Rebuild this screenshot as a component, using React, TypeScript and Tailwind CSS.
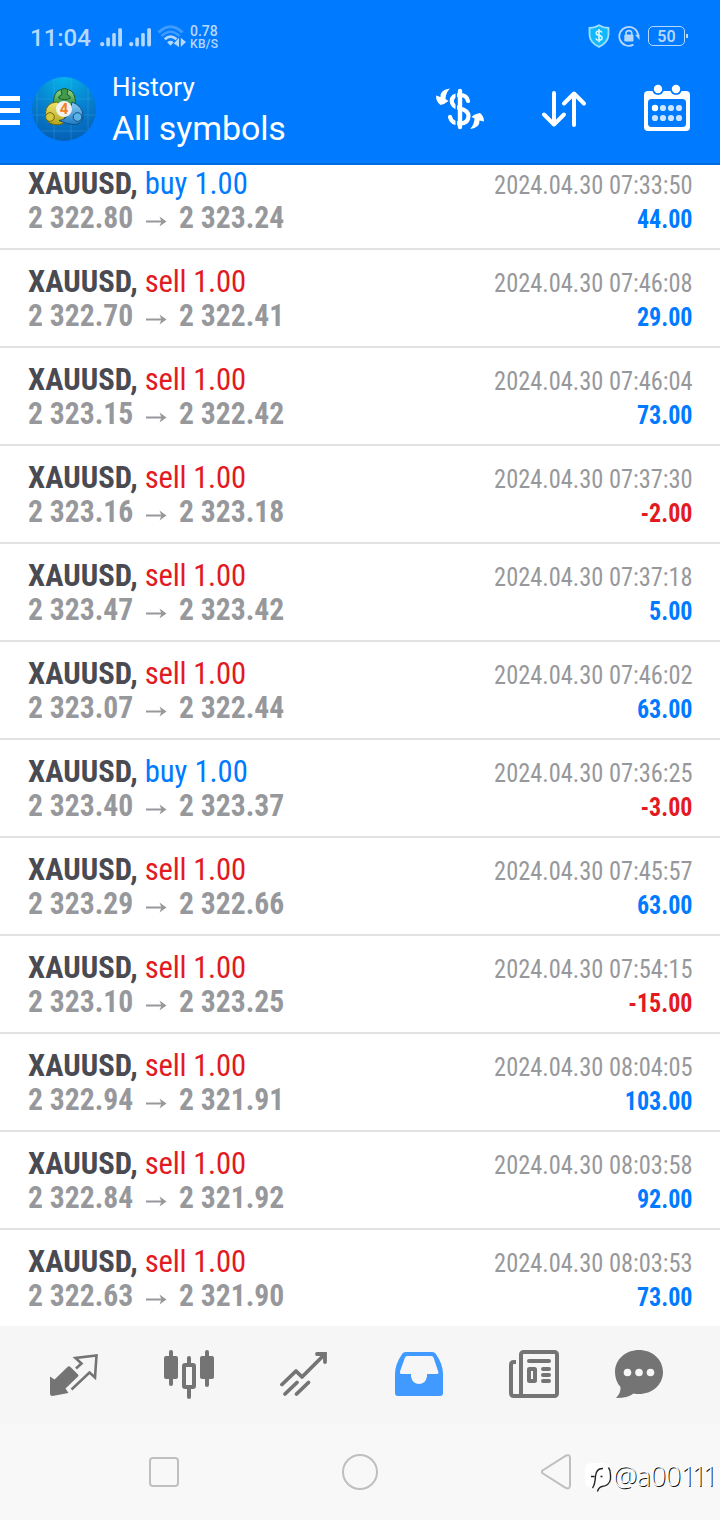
import React from "react";

type Deal = { side: "buy" | "sell"; from: string; to: string; time: string; profit: string };

const deals: Deal[] = [
  { side: "buy", from: "2 322.80", to: "2 323.24", time: "2024.04.30 07:33:50", profit: "44.00" },
  { side: "sell", from: "2 322.70", to: "2 322.41", time: "2024.04.30 07:46:08", profit: "29.00" },
  { side: "sell", from: "2 323.15", to: "2 322.42", time: "2024.04.30 07:46:04", profit: "73.00" },
  { side: "sell", from: "2 323.16", to: "2 323.18", time: "2024.04.30 07:37:30", profit: "-2.00" },
  { side: "sell", from: "2 323.47", to: "2 323.42", time: "2024.04.30 07:37:18", profit: "5.00" },
  { side: "sell", from: "2 323.07", to: "2 322.44", time: "2024.04.30 07:46:02", profit: "63.00" },
  { side: "buy", from: "2 323.40", to: "2 323.37", time: "2024.04.30 07:36:25", profit: "-3.00" },
  { side: "sell", from: "2 323.29", to: "2 322.66", time: "2024.04.30 07:45:57", profit: "63.00" },
  { side: "sell", from: "2 323.10", to: "2 323.25", time: "2024.04.30 07:54:15", profit: "-15.00" },
  { side: "sell", from: "2 322.94", to: "2 321.91", time: "2024.04.30 08:04:05", profit: "103.00" },
  { side: "sell", from: "2 322.84", to: "2 321.92", time: "2024.04.30 08:03:58", profit: "92.00" },
  { side: "sell", from: "2 322.63", to: "2 321.90", time: "2024.04.30 08:03:53", profit: "73.00" },
];

function Signal() {
  return (
    <svg width="23" height="19" viewBox="0 0 23 19" fill="#b5d8ff">
      <circle cx="2.2" cy="16.2" r="2.1" />
      <rect x="6.3" y="9.5" width="3.6" height="9" rx="1.4" />
      <rect x="12.2" y="5" width="3.6" height="13.5" rx="1.4" />
      <rect x="18.2" y="0.3" width="3.8" height="18.2" rx="1.4" />
    </svg>
  );
}

function StatusBar() {
  return (
    <div className="flex h-[74px] text-[#b5d8ff]">
      <div className="ml-[30px] mt-[24px] w-[70px] text-[24px] font-medium leading-[28px]">11:04</div>
      <div className="mt-[28px] flex gap-[6px]">
        <Signal />
        <Signal />
      </div>
      <svg className="ml-[5px] mt-[24px]" width="31" height="25" viewBox="0 0 31 25" fill="none">
        <path d="M1.500 8.500Q13.500-3 25.500 8.500" stroke="#3f9bff" strokeWidth="3" />
        <path d="M4.500 12Q13.500 3.500 22.500 12" stroke="#3f9bff" strokeWidth="2.600" />
        <path d="M7.800 15.300Q13.500 10 19.500 15.300" stroke="#b5d8ff" strokeWidth="2.800" />
        <path d="M10.200 18.200Q13.500 15.500 16.800 18.200L13.500 21.800Z" fill="#b5d8ff" />
        <path d="M22 13.800V23L16.800 19.500ZM23.800 13.800V23L29 18Z" fill="#b5d8ff" />
      </svg>
      <div className="ml-[2px] mt-[25px] text-[12px] font-medium leading-[12.5px]">
        <div className="text-[14px]">0.78</div>
        <div className="tracking-[0.3px]">KB/S</div>
      </div>
      <div className="flex-1" />
      <svg className="mt-[24px]" width="22" height="24" viewBox="0 0 22 24">
        <path d="M11 1.200Q15.500 4 20.500 4V11Q20 19 11 22.800Q2 19 1.500 11V4Q6.500 4 11 1.200Z" fill="#10b8ff" stroke="#9fe0ff" strokeWidth="1.800" />
        <path d="M14 8.500Q13.300 7 11 7Q8.200 7 8.200 9.200Q8.200 10.900 11 11.400Q14 12 14 14Q14 16.200 11 16.200Q8.500 16.200 7.800 14.500M11 5V18.200" fill="none" stroke="#d5f2ff" strokeWidth="1.700" />
      </svg>
      <svg className="ml-[8px] mt-[25px]" width="22" height="23" viewBox="0 0 22 23" fill="none">
        <path d="M20.300 11A9.500 9.500 0 1 0 15.500 19.600" stroke="#b5d8ff" strokeWidth="1.800" />
        <path d="M17 9.800H21.500V15Z" fill="#b5d8ff" />
        <rect x="6.300" y="9.500" width="9.200" height="7" rx="1" fill="#b5d8ff" />
        <path d="M8 10V8.500A2.900 2.900 0 0 1 13.800 8.500V10" stroke="#b5d8ff" strokeWidth="1.600" />
      </svg>
      <div className="ml-[8px] mt-[26px] flex h-[20px] w-[37px] items-center justify-center rounded-[5px] border border-[#b5d8ff] pt-px text-[16px] font-semibold leading-[18px]">
        50
      </div>
      <div className="ml-px mr-[32px] mt-[34px] h-[4px] w-[2px] bg-[#b5d8ff]" />
    </div>
  );
}

function Logo() {
  return (
    <svg width="64" height="64" viewBox="0 0 64 64">
      <defs>
        <radialGradient id="disc" cx="0.5" cy="0" r="1">
          <stop offset="0" stopColor="#08b4ea" />
          <stop offset="0.55" stopColor="#067fce" />
          <stop offset="1" stopColor="#0560b4" />
        </radialGradient>
        <linearGradient id="green" x1="0" y1="0" x2="0" y2="1">
          <stop offset="0" stopColor="#9bd68c" />
          <stop offset="1" stopColor="#2b8f3a" />
        </linearGradient>
        <linearGradient id="yellow" x1="0" y1="0" x2="0" y2="1">
          <stop offset="0" stopColor="#efe56a" />
          <stop offset="1" stopColor="#b3a41a" />
        </linearGradient>
        <linearGradient id="sky" x1="0" y1="0" x2="0" y2="1">
          <stop offset="0" stopColor="#8ccdf2" />
          <stop offset="1" stopColor="#1f7cc4" />
        </linearGradient>
      </defs>
      <circle cx="32" cy="32" r="32" fill="url(#disc)" />
      <path d="M5 16V48M22 2V62M39 1V63M56 11V53M5 22H59M1 38H63M9 54H55" stroke="#5bbcf0" strokeWidth="0.6" opacity="0.45" />
      <path d="M25 14.500Q32.500 9.500 40 14.500Q44.500 20 43 29H21.500Q20.500 20 25 14.500Z" fill="url(#green)" stroke="#175f25" />
      <path d="M24.500 25Q14 26 13.500 36Q13 46 22 47.500Q29 48.500 33.500 45L31 30Z" fill="url(#yellow)" stroke="#6f6712" />
      <path d="M40 25Q51 29 51 39Q50 48 41 47.500Q34 47 27 43.500Q34 43 38 35Z" fill="url(#sky)" stroke="#0d4f8c" />
      <path d="M26.500 21Q27 18.500 30 17.500Q27.500 11.500 32.500 11.500Q37.500 11.500 35 17.500Q38 18.500 38.500 21Q32.500 24.500 26.500 21Z" fill="#43994c" stroke="#175f25" />
      <circle cx="18" cy="40" r="4.300" fill="#d7c93d" stroke="#6f6712" />
      <circle cx="45.500" cy="40" r="4.300" fill="#5cb3e6" stroke="#0d4f8c" />
      <circle cx="32" cy="32" r="8" fill="#f2f2f2" />
      <text x="32" y="37.300" textAnchor="middle" fontSize="15" fontWeight="700" fontFamily="Roboto, sans-serif" fill="#f07f22">4</text>
    </svg>
  );
}

function Header() {
  return (
    <header className="h-[165px] border-b-2 border-[#006de0] bg-[#007aff]">
      <StatusBar />
      <div className="flex h-[89px] text-white">
        <div className="mt-[22px] flex w-[20px] flex-col gap-[7px]">
          <div className="h-[5px] bg-white" />
          <div className="h-[5px] bg-white" />
          <div className="h-[5px] bg-white" />
        </div>
        <div className="ml-[12px] mt-[3px]">
          <Logo />
        </div>
        <div className="ml-[16px] w-[324px]">
          <div className="-mt-[2px] text-[26px] leading-[30px]">History</div>
          <div className="mt-[6px] text-[34px] leading-[40px] tracking-[-0.1px]">All symbols</div>
        </div>
        <svg className="mt-[13px]" width="48" height="44" viewBox="0 0 48 44" fill="none">
          <path d="M14 1.500Q4 2.500 4.500 10L0 8.500Q0 15 4.500 18Q9 17 12.500 14L9.500 12Q9.500 6 14 1.500Z" fill="#fff" />
          <path d="M34 42Q44 41 43.500 33.500L48 34.500Q48 29 44 26Q38 27 35.500 30L38.500 31.500Q38.500 37.500 34 42Z" fill="#fff" />
          <path d="M32 14Q31 8 24 8Q15.800 8 15.800 14Q15.800 19.500 24 21.500Q32.500 23.500 32.500 29Q32.500 36.500 24 36.500Q15.500 36.500 14 30" stroke="#fff" strokeWidth="4.200" strokeLinecap="round" />
          <path d="M20.300 3V41" stroke="#007aff" strokeWidth="1.600" />
          <path d="M24 4V40" stroke="#fff" strokeWidth="4.400" strokeLinecap="round" />
        </svg>
        <svg className="ml-[57px] mt-[16px]" width="46" height="38" viewBox="0 0 46 38" fill="none" stroke="#fff" strokeWidth="4" strokeLinecap="round" strokeLinejoin="round">
          <path d="M13 3V34.500M3 24.500L13 34.500L23 24.500M33 35V3.500M23 13.500L33 3.500L43 13.500" />
        </svg>
        <svg className="ml-[57px] mt-[10px]" width="46" height="48" viewBox="0 0 46 48">
          <rect x="0" y="7" width="46" height="40" rx="4" fill="#fff" />
          <rect x="4" y="15" width="38" height="28" rx="3.500" fill="#007aff" />
          <circle cx="14" cy="5" r="6" fill="#007aff" />
          <circle cx="32" cy="5" r="6" fill="#007aff" />
          <circle cx="14" cy="5" r="4.200" fill="#fff" />
          <circle cx="32" cy="5" r="4.200" fill="#fff" />
          <circle cx="11" cy="24" r="3.200" fill="#fff" />
          <g fill="#cce4ff">
            <circle cx="19" cy="24" r="3.100" />
            <circle cx="27" cy="24" r="3.100" />
            <circle cx="35" cy="24" r="3.100" />
            <circle cx="11" cy="34" r="3.100" />
            <circle cx="19" cy="34" r="3.100" />
            <circle cx="27" cy="34" r="3.100" />
            <circle cx="35" cy="34" r="3.100" />
          </g>
        </svg>
      </div>
    </header>
  );
}

function DealRow({ deal }: { deal: Deal }) {
  return (
    <div className="flex h-[98px] justify-between whitespace-pre border-b-2 border-[#e2e2e4] pl-[28px] pr-[27.5px] font-['Roboto_Condensed',Roboto,sans-serif] [font-stretch:75%]">
      <div className="w-[300px] pt-[14px] text-[32px] leading-[34px]">
        <div className="h-[34px] origin-left scale-x-[0.957]">
          <span className="font-bold text-[#4a4a52]">XAUUSD, </span>
          <span className={deal.side === "buy" ? "text-[#007aff]" : "tracking-[-0.2px] text-[#e21a22]"}>{deal.side} 1.00</span>
        </div>
        <div className="flex h-[34px] font-bold text-[#97989b]">
          <div className="w-[105px] origin-left scale-x-[0.926]">{deal.from}</div>
          <svg className="ml-[13px] mr-[11.5px] mt-[15px] shrink-0" width="21" height="12" viewBox="0 0 21 12" fill="none" stroke="#97989b" strokeWidth="2">
            <path d="M0 6.500H18" />
            <path d="M13.500 1.500L20.500 6.500L13.500 11.500L15.500 6.500Z" fill="#97989b" stroke="none" />
          </svg>
          <div className="w-[105px] origin-left scale-x-[0.926]">{deal.to}</div>
        </div>
      </div>
      <div className="pt-[16px] text-right text-[26px] leading-[34px]">
        <div className="origin-right scale-x-[0.938] text-[#97989b]">{deal.time}</div>
        <div className={deal.profit.startsWith("-") ? "origin-right scale-x-[0.925] font-bold text-[#e21a22]" : "origin-right scale-x-[0.925] font-bold text-[#007aff]"}>{deal.profit}</div>
      </div>
    </div>
  );
}

function TabBar() {
  return (
    <nav className="flex h-[98px] bg-[#f6f6f6] pt-[24px]">
      <svg className="ml-[49px]" width="50" height="48" viewBox="0 0 50 48">
        <path d="M1 26.500L5.500 29.500L18.500 17Q20 15.500 21.500 17L29 24.500Q30 25.500 29 26.500L16.500 38.500L19.500 43L3.500 46Q1 46 1 44Z" fill="#747474" />
        <path d="M27 18.500L32.500 13.500L26.500 8L47.500 5.500L46 27.500L40.500 22.500L22.500 39.500" fill="none" stroke="#747474" strokeWidth="2.600" />
      </svg>
      <svg className="ml-[65px]" width="50" height="49" viewBox="0 0 50 49" fill="#747474">
        <rect x="5" y="0" width="4" height="36" rx="2" />
        <rect x="0" y="6" width="14" height="23" rx="2" />
        <rect x="41" y="0" width="4" height="37" rx="2" />
        <rect x="36" y="6" width="14" height="23" rx="2" />
        <rect x="23" y="6" width="4" height="43" rx="2" />
        <rect x="20" y="15" width="10" height="22" fill="#f6f6f6" stroke="#747474" strokeWidth="4" rx="1" />
      </svg>
      <svg className="ml-[66px] mt-[2px]" width="48" height="45" viewBox="0 0 48 45" fill="none" stroke="#747474" strokeWidth="3.800">
        <path d="M2 32.500L16 19L22 25L44 3" strokeLinecap="round" strokeLinejoin="round" />
        <path d="M37 2H45V10" strokeLinecap="round" />
        <path d="M5 42L17 30.500M16.500 42L28.500 30.500" strokeLinecap="round" />
      </svg>
      <svg className="ml-[67px] mt-[2px]" width="48" height="44" viewBox="0 0 48 44">
        <path fillRule="evenodd" d="M10.500 0H37.500Q39.500 0 40.500 1.500Q48 12 48 22V41Q48 44 45 44H3Q0 44 0 41V22Q0 12 7.500 1.500Q8.500 0 10.500 0ZM12 4Q10.500 4 10 5.500L5 19.500Q4.500 22 6.500 22H16V24.500Q17.500 32 24 32Q30.500 32 32 24.500V22H42Q44 22 43.200 19.500L38.500 5.500Q38 4 36 4Z" fill="#409aff" />
      </svg>
      <svg className="ml-[66px]" width="50" height="48" viewBox="0 0 50 48" fill="none" stroke="#747474" strokeWidth="4">
        <rect x="12" y="2" width="36" height="44" rx="2.500" />
        <path d="M7 12H5Q2 12 2 15V43Q2 46 5 46H14" />
        <path d="M20 11H40M34 19H40M34 25H40M34 31H40" strokeLinecap="round" />
        <rect x="20" y="19" width="6" height="12" rx="0.500" />
      </svg>
      <svg className="ml-[56px]" width="48" height="48" viewBox="0 0 48 48">
        <path d="M24 0C37 0 48 9 48 22S37 44 24 44Q21 44 18.500 43.500Q13 48 1 48Q6 43 5.500 37Q0 31 0 22C0 9 11 0 24 0Z" fill="#747474" />
        <g fill="#f6f6f6">
          <circle cx="12.500" cy="22.500" r="3.800" />
          <circle cx="24" cy="22.500" r="3.800" />
          <circle cx="35.500" cy="22.500" r="3.800" />
        </g>
      </svg>
    </nav>
  );
}

function SystemNav() {
  return (
    <div className="flex h-[96px] bg-[#f8f8f8]">
      <div className="ml-[149px] mt-[33px] size-[30px] rounded-[4px] border-2 border-[#bfbfbf]" />
      <div className="ml-[163px] mt-[30px] size-[36px] rounded-full border-2 border-[#bfbfbf]" />
      <svg className="ml-[163px] mt-[30px]" width="31" height="36" viewBox="0 0 31 36" fill="none">
        <path d="M1.500 16.500L24.500 1.800Q29 0 29 4V31Q29 35.500 25 34L2 19.500Q0 18 1.500 16.500Z" stroke="#bfbfbf" strokeWidth="2" />
      </svg>
      <div className="ml-[13px] mt-[39px] flex">
        <svg width="27" height="30" viewBox="0 0 27 30" fill="none">
          <path d="M7 0H18Q25.500 1 25.500 8V17Q25 25 16 25L13 29L12 25H7Q0 25 0 18V7Q0 0 7 0Z" fill="#fff" />
          <path d="M6 13.500H9.500M7.500 25Q10 22 10.500 13Q11.500 5 18 5.500M15.500 13.500H17.500M23.500 4.500Q25.500 7 25.500 12V16Q24.500 22.500 17 23.500Q13.500 24.500 12.500 28.500" stroke="#222" strokeWidth="1.400" />
        </svg>
        <span className="ml-px whitespace-nowrap font-['Open_Sans',sans-serif] text-[27px] font-light leading-[26px] tracking-[-0.4px] text-white [text-shadow:1px_1px_0.500px_#111]">
          @a00<span className="tracking-[-4.400px]">111</span>
        </span>
      </div>
    </div>
  );
}

export default function App() {
  return (
    <div className="flex h-[1520px] w-[720px] flex-col overflow-hidden bg-white font-[Roboto,sans-serif]">
      <Header />
      <main className="h-[1161px] overflow-hidden">
        <div className="-mt-[13px]">
          {deals.map((deal, i) => (
            <DealRow key={i} deal={deal} />
          ))}
        </div>
      </main>
      <TabBar />
      <SystemNav />
    </div>
  );
}
